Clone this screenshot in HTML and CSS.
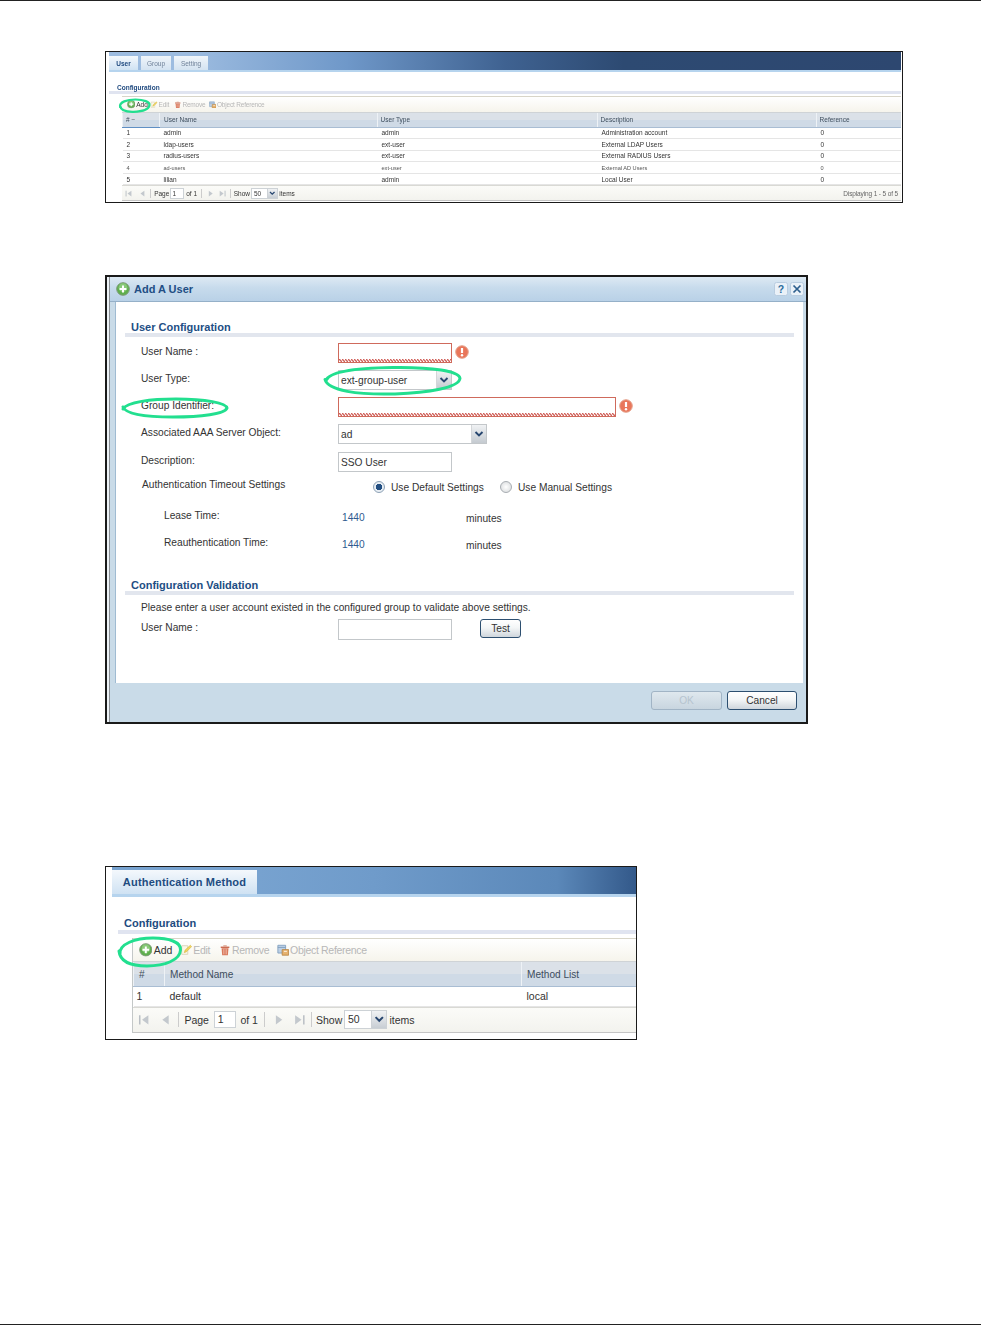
FILE: index.html
```html
<!DOCTYPE html>
<html lang="en">
<head>
<meta charset="utf-8">
<title>Add A User</title>
<link rel="stylesheet" href="styles.css">
</head>
<body>
<svg class="defs" aria-hidden="true">
  <symbol id="i-add" viewBox="0 0 14 14">
    <circle cx="7" cy="7" r="6.3" fill="#5fae4d" stroke="#7d9a78" stroke-width="1"/>
    <circle cx="7" cy="5.6" r="4.4" fill="#9ad48a" opacity=".7"/>
    <path d="M7 3.6v6.8M3.6 7h6.8" stroke="#fff" stroke-width="2"/>
  </symbol>
  <symbol id="i-edit" viewBox="0 0 14 14">
    <path d="M2 2h7v10H2z" fill="#fbf7e8" stroke="#d8d2b8"/>
    <path d="M5 10l1-3 6-5.500 1.500 1.500-6 6z" fill="#f2d65e" stroke="#cfb13f" stroke-width=".7"/>
  </symbol>
  <symbol id="i-trash" viewBox="0 0 14 14">
    <path d="M2 3h10v1.600H2z" fill="#c9664a"/>
    <path d="M5 1.500h4V3H5z" fill="#d99a86"/>
    <path d="M3 5h8l-.7 8H3.700z" fill="#d9795c"/>
    <path d="M5.300 6v6M7 6v6M8.700 6v6" stroke="#f3c7b6" stroke-width=".7"/>
  </symbol>
  <symbol id="i-ref" viewBox="0 0 14 14">
    <path d="M1 1.500h9v9H1z" fill="#bcd0e6" stroke="#7f9dbd"/>
    <path d="M1 4h9" stroke="#7f9dbd"/>
    <path d="M6 6.500h7.500V13H6z" fill="#e6b26e" stroke="#b98643"/>
    <path d="M8 8.500h3.500" stroke="#fff" stroke-width="1"/>
  </symbol>
  <symbol id="i-first" viewBox="0 0 10 10"><path d="M1.500 1v8" stroke="#b9bec4" stroke-width="1.300"/><path d="M9 1L3.500 5 9 9z" fill="#c3c8cd"/></symbol>
  <symbol id="i-prev" viewBox="0 0 10 10"><path d="M7.500 1L2 5l5.500 4z" fill="#c3c8cd"/></symbol>
  <symbol id="i-next" viewBox="0 0 10 10"><path d="M2.500 1L8 5 2.500 9z" fill="#c3c8cd"/></symbol>
  <symbol id="i-last" viewBox="0 0 10 10"><path d="M8.500 1v8" stroke="#b9bec4" stroke-width="1.300"/><path d="M1 1l5.500 4L1 9z" fill="#c3c8cd"/></symbol>
  <symbol id="i-chev" viewBox="0 0 10 10"><path d="M1.500 3L5 6.500 8.500 3" fill="none" stroke="#27466f" stroke-width="1.900"/></symbol>
  <symbol id="i-err" viewBox="0 0 14 14">
    <circle cx="7" cy="7" r="6.300" fill="#e9765a" stroke="#e5a48f"/>
    <path d="M7 3v5" stroke="#fff" stroke-width="2.200"/><circle cx="7" cy="10.300" r="1.200" fill="#fff"/>
  </symbol>
  <symbol id="i-help" viewBox="0 0 14 14"><rect x=".5" y=".5" width="13" height="13" rx="2" fill="#eaf1f8" stroke="#b9cde0"/><text x="7" y="11" text-anchor="middle" font-family="Liberation Sans" font-weight="700" font-size="10.500" fill="#2d6d9e">?</text></symbol>
  <symbol id="i-close" viewBox="0 0 14 14"><rect x=".5" y=".5" width="13" height="13" rx="2" fill="#eaf1f8" stroke="#b9cde0"/><path d="M3.500 3.500l7 7M10.500 3.500l-7 7" stroke="#2d5f8e" stroke-width="1.700"/></symbol>
</svg>

<main class="page">

  <section class="shot shot-users">
    <div class="tabbar">
      <span class="tab tab-on">User</span>
      <span class="tab">Group</span>
      <span class="tab">Setting</span>
    </div>
    <h3 class="section-title">Configuration</h3>
    <div class="section-rule"></div>
    <div class="panel">
      <div class="toolbar">
        <span class="tool tool-add"><svg class="ic ic-add"><use href="#i-add"/></svg>Add</span>
        <span class="tool tool-edit off"><svg class="ic"><use href="#i-edit"/></svg>Edit</span>
        <span class="tool tool-remove off"><svg class="ic"><use href="#i-trash"/></svg>Remove</span>
        <span class="tool tool-ref off"><svg class="ic"><use href="#i-ref"/></svg>Object Reference</span>
      </div>
      <table class="grid">
        <thead><tr><th class="c-num sorted"># −</th><th class="c-name">User Name</th><th class="c-type">User Type</th><th class="c-desc">Description</th><th class="c-ref">Reference</th></tr></thead>
        <tbody>
          <tr><td>1</td><td>admin</td><td>admin</td><td>Administration account</td><td>0</td></tr>
          <tr><td>2</td><td>ldap-users</td><td>ext-user</td><td>External LDAP Users</td><td>0</td></tr>
          <tr><td>3</td><td>radius-users</td><td>ext-user</td><td>External RADIUS Users</td><td>0</td></tr>
          <tr class="faint"><td>4</td><td>ad-users</td><td>ext-user</td><td>External AD Users</td><td>0</td></tr>
          <tr><td>5</td><td>lilian</td><td>admin</td><td>Local User</td><td>0</td></tr>
        </tbody>
      </table>
      <div class="pager">
        <svg class="pg pg-first"><use href="#i-first"/></svg>
        <svg class="pg pg-prev"><use href="#i-prev"/></svg>
        <i class="pg-sep"></i>
        <span class="pg-page">Page</span><span class="pg-input">1</span><span class="pg-of">of 1</span>
        <i class="pg-sep"></i>
        <svg class="pg pg-next"><use href="#i-next"/></svg>
        <svg class="pg pg-last"><use href="#i-last"/></svg>
        <i class="pg-sep"></i>
        <span class="pg-show">Show</span>
        <span class="pg-select"><span class="pg-val">50</span><span class="pg-btn"><svg><use href="#i-chev"/></svg></span></span>
        <span class="pg-items">items</span>
        <span class="pg-total">Displaying 1 - 5 of 5</span>
      </div>
    </div>
    <svg class="ring ring-users-add" viewBox="0 0 32 15" preserveAspectRatio="none"><path d="M2 9C1 4 9 1.500 17 1.500 25 1.500 31 4 30.500 7 30 11 24 13.500 15 13.800 7 14 2.500 12 2 7.500" vector-effect="non-scaling-stroke"/></svg>
  </section>

  <section class="dialog">
    <header class="dialog-title">
      <svg class="title-ic"><use href="#i-add"/></svg>
      <h2>Add A User</h2>
      <svg class="win-btn"><use href="#i-help"/></svg>
      <svg class="win-btn"><use href="#i-close"/></svg>
    </header>
    <div class="dialog-body">
      <h3 class="form-heading">User Configuration</h3>
      <div class="form-rule"></div>
      <div class="form-row">
        <label>User Name :</label>
        <div class="field"><input class="txt invalid w114" type="text"><svg class="err"><use href="#i-err"/></svg></div>
      </div>
      <div class="form-row">
        <label>User Type:</label>
        <div class="field"><div class="select w114"><span>ext-group-user</span><b><svg><use href="#i-chev"/></svg></b></div></div>
      </div>
      <div class="form-row row-nudge">
        <label>Group Identifier:</label>
        <div class="field"><input class="txt invalid w278" type="text"><svg class="err"><use href="#i-err"/></svg></div>
      </div>
      <div class="form-row row-nudge">
        <label>Associated AAA Server Object:</label>
        <div class="field"><div class="select w149"><span>ad</span><b><svg><use href="#i-chev"/></svg></b></div></div>
      </div>
      <div class="form-row row-short">
        <label>Description:</label>
        <div class="field"><input class="txt w114" type="text" value="SSO User"></div>
      </div>
      <div class="form-row row-auth">
        <label>Authentication Timeout Settings</label>
        <div class="radios">
          <span class="radio on"></span><span class="radio-label">Use Default Settings</span>
          <span class="radio"></span><span class="radio-label">Use Manual Settings</span>
        </div>
      </div>
      <div class="form-row row-time">
        <label>Lease Time:</label>
        <div class="time"><span class="time-val">1440</span><span class="time-unit">minutes</span></div>
      </div>
      <div class="form-row row-time">
        <label>Reauthentication Time:</label>
        <div class="time"><span class="time-val">1440</span><span class="time-unit">minutes</span></div>
      </div>
      <h3 class="form-heading heading-2">Configuration Validation</h3>
      <div class="form-rule"></div>
      <p class="hint">Please enter a user account existed in the configured group to validate above settings.</p>
      <div class="form-row">
        <label>User Name :</label>
        <div class="field"><input class="txt w114 h21" type="text"><button class="btn btn-test" type="button">Test</button></div>
      </div>
    </div>
    <footer class="dialog-footer">
      <button class="btn btn-ok" type="button" disabled>OK</button>
      <button class="btn btn-cancel" type="button">Cancel</button>
    </footer>
    <svg class="ring ring-type" viewBox="0 0 140 30" preserveAspectRatio="none"><path d="M3 15C6 7 30 3 70 2.500 110 2 136 6 137 13 136 22 105 27 72 28 35 29 5 25 2 14" vector-effect="non-scaling-stroke"/></svg>
    <svg class="ring ring-group" viewBox="0 0 108 22" preserveAspectRatio="none"><path d="M2 12C6 5 30 2 55 2 85 2 105 6 106 11 104 17 80 20 52 20 25 20 5 17 2 10" vector-effect="non-scaling-stroke"/></svg>
  </section>

  <section class="shot shot-auth">
    <div class="tabbar">
      <span class="tab tab-on">Authentication Method</span>
    </div>
    <h3 class="section-title">Configuration</h3>
    <div class="section-rule"></div>
    <div class="panel">
      <div class="toolbar">
        <span class="tool tool-add"><svg class="ic ic-add"><use href="#i-add"/></svg>Add</span>
        <span class="tool tool-edit off"><svg class="ic"><use href="#i-edit"/></svg>Edit</span>
        <span class="tool tool-remove off"><svg class="ic"><use href="#i-trash"/></svg>Remove</span>
        <span class="tool tool-ref off"><svg class="ic"><use href="#i-ref"/></svg>Object Reference</span>
      </div>
      <table class="grid">
        <thead><tr><th class="c-num">#</th><th class="c-method">Method Name</th><th class="c-list">Method List</th></tr></thead>
        <tbody><tr><td>1</td><td>default</td><td>local</td></tr></tbody>
      </table>
      <div class="pager">
        <svg class="pg pg-first"><use href="#i-first"/></svg>
        <svg class="pg pg-prev"><use href="#i-prev"/></svg>
        <i class="pg-sep"></i>
        <span class="pg-page">Page</span><span class="pg-input">1</span><span class="pg-of">of 1</span>
        <i class="pg-sep"></i>
        <svg class="pg pg-next"><use href="#i-next"/></svg>
        <svg class="pg pg-last"><use href="#i-last"/></svg>
        <i class="pg-sep"></i>
        <span class="pg-show">Show</span>
        <span class="pg-select"><span class="pg-val">50</span><span class="pg-btn"><svg><use href="#i-chev"/></svg></span></span>
        <span class="pg-items">items</span>
      </div>
    </div>
    <svg class="ring ring-auth-add" viewBox="0 0 66 32" preserveAspectRatio="none"><path d="M3 18C2 8 18 2 36 2 52 2 64 6 63.500 14 63 24 48 30 30 30 12 30 3 25 2 15" vector-effect="non-scaling-stroke"/></svg>
  </section>

</main>
</body>
</html>
```

FILE: styles.css
```css
* { box-sizing: border-box; }
html, body { margin: 0; padding: 0; background: #fff; }
body { font-family: "Liberation Sans", Arial, sans-serif; color: #333; }
.defs { display: none; }

.page {
  height: 1325px;
  border-top: 1px solid #222;
  border-bottom: 1px solid #222;
  padding: 50px 0 0 105px;
  overflow: hidden;
}

/* Screenshots with grid panels */
.shot { position: relative; border: 1px solid #1a1a1a; background: #fff; }
.shot-users { width: 798px; height: 152px; font-size: 6.5px; padding: 0 1px 0 3px; filter: blur(.25px); }
.shot-auth { width: 532px; height: 174px; margin-top: 142px; font-size: 10.5px; padding-left: 6px; }

.tabbar { display: flex; align-items: flex-end; border-bottom: 2px solid #b6d4ee; }
.shot-users .tabbar { height: 20px; gap: 3px; background: linear-gradient(90deg, #9dbce0 10%, #6f98c9 30%, #3f6291 50%, #2d4a72 65%, #2d4770); }
.shot-auth .tabbar { height: 30px; border-bottom-width: 3px; background: linear-gradient(90deg, #78a3d0 25%, #6f9bca 50%, #5b88b9 85%, #33598a); }

.tab { display: flex; align-items: center; justify-content: center; color: #6f8199; background: linear-gradient(#f0f5fa, #d4e3f1); }
.tab-on { color: #214b80; font-weight: 700; background: linear-gradient(#f4f8fc, #cfe2f3); }
.shot-users .tab { height: 14px; padding: 0 9px; }
.shot-users .tab:first-child { width: 29px; padding: 0; }
.shot-users .tab:nth-child(2) { width: 30px; padding: 0; }
.shot-users .tab:nth-child(3) { width: 34px; padding: 0; }
.shot-auth .tab { height: 24px; width: 145px; font-size: 11px; letter-spacing: .2px; }

.section-title { margin: 0; color: #214b80; font-weight: 700; font-size: inherit; }
.shot-users .section-title { margin: 10px 0 0 8px; line-height: 11px; font-size: 6.5px; }
.shot-auth .section-title { margin: 18px 0 0 12px; line-height: 17px; font-size: 11px; }
.section-rule { background: #e0e4f0; }
.shot-users .section-rule { height: 3px; margin-top: -2px; }
.shot-auth .section-rule { height: 4px; margin: -2px 0 0 6px; }

.panel { display: flex; flex-direction: column; }
.shot-users .panel { margin: 2px 0 0 13px; }
.shot-auth .panel { margin: 4px 0 0 20px; border-left: 1px solid #c4c8c8; }

.toolbar { display: flex; align-items: center; background: linear-gradient(#fff, #f6f4ec); border-top: 1px solid #d8d5c8; border-bottom: 1px solid #cfd3d6; }
.shot-users .toolbar { height: 17px; }
.shot-auth .toolbar { height: 24px; }

.tool { display: flex; align-items: center; color: #333; white-space: nowrap; }
.tool.off { color: #b7b7b7; letter-spacing: -.03em; }
.ic { width: 1.15em; height: 1.15em; flex: none; margin-right: .12em; }
.ic-add { width: 1.3em; height: 1.3em; }
.tool-add { margin-left: .55em; }
.tool-edit { margin-left: .72em; }
.tool-remove { margin-left: .82em; }
.tool-ref { margin-left: .72em; }
.shot-users .toolbar .tool-add { margin-left: 5px; }
.shot-users .toolbar .tool-edit { margin-left: .4em; }
.shot-users .toolbar .tool-remove { margin-left: .8em; }
.shot-users .toolbar .tool-ref { margin-left: .5em; }

.grid { border-collapse: collapse; table-layout: fixed; width: 100%; }
.grid th { font-weight: 400; text-align: left; color: #3d4d5d; background: linear-gradient(#dbe1e8 50%, #cfdae6 50%); border-bottom: 1px solid #a9bdd3; padding: 0 0 0 .4em; border-left: 1px solid #eef2f6; }
.grid td { padding: 0 0 0 .4em; border-bottom: 1px solid #e5e5e5; color: #333; white-space: nowrap; }

.shot-users .grid th { height: 14px; }
.shot-users .grid td { height: 11.600px; padding-left: 4px; }
.shot-users .c-num { width: 37px; padding-left: 3px; }
.shot-users .sorted { border-bottom: 1px solid #5f8fc4; }
.shot-users .c-name { width: 218px; padding-left: 4px; }
.shot-users .c-type { width: 220px; }
.shot-users .c-desc { width: 219px; }
.faint { font-size: 5.600px; }
.faint td { color: #555; }

.shot-auth .grid th { height: 24px; padding-top: 2px; font-size: 10.100px; }
.shot-auth .grid td { height: 20px; padding-left: 4px; }
.shot-auth .c-num { width: 31px; padding-left: 5px; }
.shot-auth .c-method { width: 357px; padding-left: 5px; }
.shot-auth .c-list { padding-left: 5px; }
.shot-auth .grid td:nth-child(2), .shot-auth .grid td:nth-child(3) { padding-left: 5px; }
.shot-auth .grid td:first-child { padding-left: 3px; }

.pager { display: flex; align-items: center; background: linear-gradient(#fbfbf8, #f3f3ee); border-top: 1px solid #d9d9d4; border-bottom: 1px solid #c5c5c5; }
.shot-users .pager { height: 16px; padding-left: .5em; }
.shot-auth .pager { height: 26px; padding-left: .5em; }
.pg { width: 1.1em; height: 1.1em; flex: none; }
.pg-prev { margin-left: 1em; }
.pg-next { margin-left: .8em; }
.pg-last { margin-left: .85em; }
.pg-sep { width: 1px; height: 1.5em; background: #ccc; margin-left: .55em; }
.pg-page { margin-left: .55em; }
.pg-input { margin-left: .5em; width: 2.1em; height: 1.7em; border: 1px solid #cdd2d6; background: #fff; line-height: 1.500em; padding-left: .25em; }
.shot-users .pg-input { margin-left: .1em; }
.pg-of { margin-left: .4em; }
.pg-show { margin-left: .4em; }
.pg-select { display: flex; margin-left: .2em; width: 4.100em; height: 1.800em; border: 1px solid #cdd2d6; background: #fff; }
.pg-val { flex: 1; padding-left: .25em; line-height: 1.600em; }
.pg-btn { width: 1.500em; background: linear-gradient(#f0f2f4, #c8ced4); border-left: 1px solid #cdd2d6; display: flex; align-items: center; justify-content: center; }
.pg-btn svg { width: 1em; height: 1em; }
.pg-items { margin-left: .2em; }
.pg-total { margin-left: auto; margin-right: 3px; color: #666; letter-spacing: -.02em; }

/* Hand-drawn highlight rings */
.ring { position: absolute; overflow: visible; fill: none; stroke: #22df8f; stroke-width: 3px; stroke-linecap: round; }
.ring-users-add { left: 12px; top: 46px; width: 33px; height: 15px; stroke-width: 2.200px; }
.ring-type { left: 216px; top: 88px; width: 140px; height: 31px; }
.ring-group { left: 14px; top: 120px; width: 108px; height: 22px; }
.ring-auth-add { left: 11px; top: 69px; width: 66px; height: 32px; }

/* Dialog */
.dialog {
  position: relative;
  display: flex;
  flex-direction: column;
  width: 703px;
  height: 449px;
  margin-top: 72px;
  border: 2px solid #1a1a1a;
  background: #c9dbe8;
  box-shadow: inset 2px 0 #eef3f7, inset 3px 0 #8a8f94;
  font-size: 10.2px;
}
.dialog-title {
  display: flex;
  align-items: center;
  height: 25px;
  margin-left: 3px;
  padding: 0 2px 0 6px;
  background: linear-gradient(#dde9f3, #c7dbec 45%, #b9d1e7);
  border-bottom: 1px solid #95b0c8;
  flex: none;
}
.title-ic { width: 14px; height: 14px; flex: none; }
.dialog-title h2 { margin: 0 auto 0 4px; font-size: 11px; font-weight: 700; color: #224e84; }
.win-btn { width: 14px; height: 14px; flex: none; margin-left: 2px; }

.dialog-body { flex: none; height: 381px; margin: 0 3px 0 8px; padding: 18px 0 0; background: #fff; border-left: 1px solid #9fbbd2; }
.form-heading { margin: 0 0 0 15px; height: 13px; line-height: 15px; font-size: 11px; font-weight: 700; color: #224e84; }
.form-rule { height: 4px; margin: 0 9px; background: #e2e6ee; }
.form-rule + .form-row { margin-top: 6px; }
.heading-2 { margin-top: 17px; }

.form-row { display: grid; grid-template-columns: 197px auto; height: 27px; padding-left: 25px; }
.form-row label { line-height: 18px; color: #333; }
.field { display: flex; align-items: flex-start; }
.row-short { height: 25px; margin-top: 1px; }
.row-auth { height: 30px; }
.row-auth label { padding-left: 1px; line-height: 16px; }
.row-time label { padding-left: 23px; }

.txt { height: 20px; padding: 0 2px; border: 1px solid #c3c7ca; background: #fff; font: inherit; color: #333; }
.h21 { height: 21px; }
.w114 { width: 114px; }
.w149 { width: 149px; }
.w278 { width: 278px; }
.invalid {
  border-color: #cf6a5c;
  background:
    linear-gradient(45deg, transparent 35%, #d0605a 35% 65%, transparent 65%) left bottom / 3px 3px repeat-x,
    linear-gradient(-45deg, transparent 35%, #d0605a 35% 65%, transparent 65%) 1.500px bottom / 3px 3px repeat-x,
    #fff;
}
.err { width: 14px; height: 14px; flex: none; margin: 2px 0 0 3px; }

.select { display: flex; height: 20px; border: 1px solid #c3c7ca; background: #fff; }
.select span { flex: 1; line-height: 19px; padding-left: 2px; }
.select b { display: flex; align-items: center; justify-content: center; width: 15px; background: linear-gradient(#f0f2f4, #c4cad0); border-left: 1px solid #d3d6d9; }
.select svg { width: 10px; height: 10px; }

.radios { display: flex; align-items: center; height: 16px; margin-top: 2px; padding-left: 35px; }
.radio { width: 12px; height: 12px; border-radius: 50%; border: 1px solid #a8adb2; background: radial-gradient(#fff, #d5d8da); flex: none; }
.radio.on { background: radial-gradient(#234f82 0 3px, #e8eef4 3.500px); border-color: #8ea2b6; }
.radio-label { margin-left: 6px; width: 109px; white-space: nowrap; }
.radio-label:last-child { width: auto; }

.time { display: flex; }
.time-val { width: 128px; padding-left: 4px; margin-top: 2px; line-height: 18px; color: #2f5b90; }
.time-unit { margin-top: 3px; line-height: 18px; }

.hint { margin: 4px 0 2px 25px; line-height: 18px; color: #333; }

.btn { font: inherit; color: #333; border: 1px solid #2d4f70; border-radius: 3px; background: linear-gradient(#fff, #f4f6f7 45%, #cfd6dc); padding: 0 0 0; }
.btn-test { width: 41px; height: 19px; margin-left: 28px; }
.btn-ok { width: 71px; height: 19px; }
.btn-cancel { width: 70px; height: 19px; }
.btn:disabled { color: #b6c4cf; border-color: #a1b4c5; background: linear-gradient(#dfe8ee, #c8d5df); }

.dialog-footer { display: flex; justify-content: flex-end; gap: 5px; padding: 8px 9px 0 0; }
```
